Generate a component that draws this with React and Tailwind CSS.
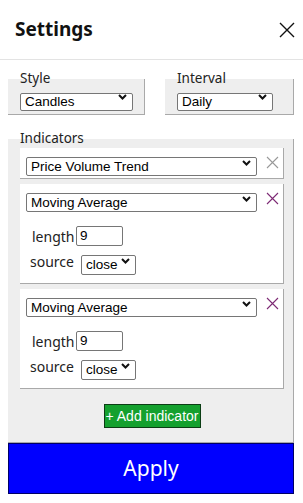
import React from "react"

const labelFont = { fontFamily: '"Noto Sans", "Open Sans", sans-serif' }

function Chevron() {
  return (
    <svg className="pointer-events-none absolute right-[6px] top-1/2 -translate-y-1/2" width="9" height="6" viewBox="0 0 9 6">
      <path d="M1 1 L4.5 4.5 L8 1" fill="none" stroke="#111" strokeWidth="2" />
    </svg>
  )
}

function Select({ value, className }) {
  return (
    <div className={`relative ${className}`}>
      <select
        defaultValue={value}
        className="w-full h-full appearance-none border border-[#767676] rounded-[2px] bg-white pl-[4px] text-[13.5px] text-black leading-none font-['Liberation_Sans',Arial,sans-serif]"
      >
        <option>{value}</option>
      </select>
      <Chevron />
    </div>
  )
}

function CloseIcon({ color }) {
  return (
    <svg width="13" height="13" viewBox="0 0 13 13" className="shrink-0">
      <path d="M1 1 L12 12 M12 1 L1 12" stroke={color} strokeWidth="1.1" />
    </svg>
  )
}

function IndicatorCard({ name, color, params }) {
  return (
    <div className="bg-white border-r border-b border-[#a9a9a9] pt-[5px] pl-[6px] pb-[6px]">
      <div className="flex items-center gap-[9px]">
        <Select value={name} className="w-[231px] h-[19px]" />
        <CloseIcon color={color} />
      </div>
      {params && (
        <div className="mt-[18px] pb-[6px]">
          <div className="flex items-center h-[20px] pl-[6px]">
            <span className="text-[14px] text-[#222] w-[44px]" style={labelFont}>length</span>
            <input
              defaultValue="9"
              className="w-[47px] h-[20px] border border-[#767676] rounded-[2px] pl-[3px] text-[13.5px] font-['Liberation_Sans',Arial,sans-serif]"
            />
          </div>
          <div className="flex items-center h-[20px] mt-[5px] pl-[4px]">
            <span className="text-[14px] text-[#222] w-[51px]" style={labelFont}>source</span>
            <Select value="close" className="w-[55px] h-[20px]" />
          </div>
        </div>
      )}
    </div>
  )
}

export default function App() {
  return (
    <div className="w-[303px] h-[503px] bg-white overflow-hidden">
      {/* Header */}
      <div className="h-[60px] border-b border-[#e3e3e3] flex items-center justify-between pl-[15px] pr-[6px]">
        <h1 className="text-[19px] font-bold text-[#111]" style={labelFont}>Settings</h1>
        <svg width="16" height="16" viewBox="0 0 16 16" className="mr-[2px]">
          <path d="M1 1 L15 15 M15 1 L1 15" stroke="#111" strokeWidth="1.4" />
        </svg>
      </div>

      <div className="px-[8px] pt-[11px]">
        {/* Style / Interval */}
        <div className="flex gap-[20px]">
          <fieldset className="w-[137px] bg-[#eeeeee] border-r border-b border-[#a9a9a9] pl-[12px] pb-[8px]">
            <legend className="text-[13.5px] leading-[15px] text-[#222]" style={labelFont}>Style</legend>
            <Select value="Candles" className="w-[113px] h-[18px] mt-[2px]" />
          </fieldset>
          <fieldset className="w-[129px] bg-[#eeeeee] border-r border-b border-[#a9a9a9] pl-[12px] pb-[8px]">
            <legend className="text-[13.5px] leading-[15px] text-[#222]" style={labelFont}>Interval</legend>
            <Select value="Daily" className="w-[96px] h-[18px] mt-[2px]" />
          </fieldset>
        </div>

        {/* Indicators */}
        <fieldset className="mt-[16px] w-[286px] bg-[#eeeeee] border-r border-b border-[#a9a9a9] pl-[12px] pr-[9px] pb-[14px]">
          <legend className="text-[13.5px] leading-[15px] text-[#222]" style={labelFont}>Indicators</legend>
          <div className="mt-[2px] flex flex-col gap-[5px]">
            <IndicatorCard name="Price Volume Trend" color="#999999" />
            <IndicatorCard name="Moving Average" color="#7d2a74" params />
            <IndicatorCard name="Moving Average" color="#7d2a74" params />
          </div>
          <div className="flex justify-center mt-[15px]">
            <button className="w-[97px] h-[24px] bg-[#14a02e] border border-[#0b3d14] text-white text-[14px] font-['Liberation_Sans',Arial,sans-serif]">
              + Add indicator
            </button>
          </div>
        </fieldset>

        {/* Apply */}
        <button className="w-[286px] h-[51px] bg-[#0000ff] border border-[#000066] text-white text-[21px]" style={labelFont}>
          Apply
        </button>
      </div>
    </div>
  )
}
